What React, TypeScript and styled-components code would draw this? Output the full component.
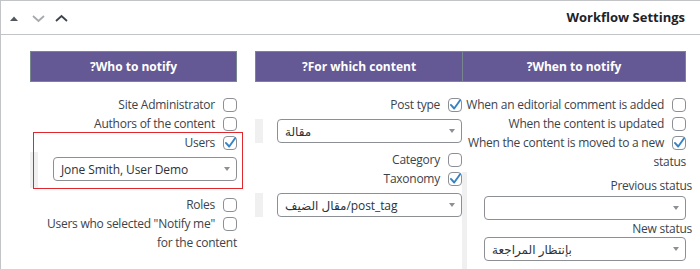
import React from "react";
import styled, { createGlobalStyle } from "styled-components";

const GlobalStyle = createGlobalStyle`
  html, body { margin: 0; padding: 0; background: #ffffff; }
  body {
    overflow: hidden;
    font-family: "Open Sans", "DejaVu Sans", sans-serif;
    color: #3c434a;
  }
  * { box-sizing: border-box; }
`;

const Postbox = styled.section`
  width: 700px;
  height: 269px;
  overflow: hidden;
  border: 1px solid #c3c4c7;
  border-right: 0;
  border-bottom: 0;
  background: #ffffff;
  direction: rtl;
`;

const Header = styled.header`
  height: 34px;
  border-bottom: 1px solid #c3c4c7;
  display: flex;
  align-items: center;
  justify-content: space-between;
  padding: 0 15px 0 8px;
`;

const Title = styled.h2`
  margin: 0;
  font-size: 13px;
  font-weight: 700;
  color: #1d2327;
  line-height: 1;
`;

const Handles = styled.div`
  direction: ltr;
  display: flex;
  align-items: center;
  margin-top: 1px;
`;

const HandleIcon = styled.svg<{ $gap: number }>`
  display: block;
  margin-left: ${(p) => p.$gap}px;
  overflow: visible;
`;

const Body = styled.div`
  display: flex;
  align-items: flex-start;
  gap: 18px;
  padding: 16px 14px 0 29px;
`;

const Table = styled.div<{ $cols: string }>`
  display: grid;
  grid-template-columns: ${(p) => p.$cols};
`;

const HeadCell = styled.div<{ $divider?: boolean }>`
  height: 31px;
  background: #645994;
  color: #ffffff;
  font-size: 12px;
  font-weight: 700;
  display: flex;
  align-items: center;
  justify-content: center;
  border: 1px solid #76878d;
  border-right-width: ${(p) => (p.$divider ? 0 : 1)}px;
`;

const Cell = styled.div`
  padding-top: 13px;
  min-width: 0;
`;

const CheckRow = styled.div<{ $mt?: number }>`
  font-size: 12px;
  letter-spacing: -0.25px;
  line-height: 19px;
  text-align: right;
  color: #3c434a;
  margin-top: ${(p) => p.$mt ?? 0}px;
`;

const BoxSvg = styled.svg`
  display: inline-block;
  vertical-align: -2.5px;
  margin-left: 8px;
  overflow: visible;
`;

const Checkbox = ({ checked }: { checked?: boolean }) => (
  <BoxSvg width="14" height="14" viewBox="0 0 14 14">
    <rect x="0.5" y="0.5" width="13" height="13" rx="3.5" fill="#ffffff" stroke="#8c8f94" />
    {checked && (
      <polyline
        points="2.9,6.9 6.2,10.5 12.1,2.3"
        fill="none"
        stroke="#3582c4"
        strokeWidth="1.9"
        strokeLinecap="round"
        strokeLinejoin="round"
      />
    )}
  </BoxSvg>
);

const Option = ({ checked, children, mt }: { checked?: boolean; children: React.ReactNode; mt?: number }) => (
  <CheckRow $mt={mt}>
    <Checkbox checked={checked} />
    {children}
  </CheckRow>
);

const SelectWrap = styled.div<{ $strip: number; $pad: number; $pt?: number; $pb?: number; $mt?: number }>`
  border-left: ${(p) => p.$strip}px solid #f0f0f1;
  padding: ${(p) => p.$pt ?? 0}px 0 ${(p) => p.$pb ?? 0}px ${(p) => p.$pad}px;
  margin-top: ${(p) => p.$mt ?? 0}px;
`;

const SelectBox = styled.div<{ $mt?: number }>`
  direction: ltr;
  height: 24px;
  margin-top: ${(p) => p.$mt ?? 0}px;
  border: 1px solid #8c8f94;
  border-radius: 4px;
  background: #ffffff;
  display: flex;
  align-items: center;
  justify-content: space-between;
  padding: 0 6px 0 7px;
  font-size: 12px;
  letter-spacing: -0.1px;
  color: #2c3338;
  white-space: nowrap;
`;

const SelectText = styled.span`
  font-family: "Open Sans", "DejaVu Sans", sans-serif;
`;

const Arrow = styled.span`
  width: 0;
  height: 0;
  border-left: 3.5px solid transparent;
  border-right: 3.5px solid transparent;
  border-top: 4px solid #8c8f94;
  flex: none;
`;

const Select = ({ value, mt }: { value?: string; mt?: number }) => (
  <SelectBox $mt={mt}>
    <SelectText>{value ?? ""}</SelectText>
    <Arrow />
  </SelectBox>
);

const UsersGroup = styled.div`
  position: relative;
`;

const Highlight = styled.div`
  position: absolute;
  top: -1px;
  bottom: -1px;
  left: 3px;
  right: -6px;
  border: 1px solid #e0282e;
  pointer-events: none;
`;

const StatusBlock = styled.div`
  margin-top: 1px;
  border-left: 5px solid #f0f0f1;
  padding: 5px 0 40px 17px;
`;

const FieldLabel = styled.div`
  font-size: 12px;
  letter-spacing: -0.25px;
  line-height: 17px;
  text-align: right;
  margin-right: -6px;
  color: #3c434a;
`;

export default function App() {
  return (
    <>
      <GlobalStyle />
      <Postbox>
        <Header>
          <Title>Workflow Settings</Title>
          <Handles>
            <HandleIcon $gap={1} width="8" height="5" viewBox="0 0 8 5">
              <polygon points="0,5 4,0.5 8,5" fill="#50575e" />
            </HandleIcon>
            <HandleIcon $gap={14} width="13" height="7" viewBox="0 0 13 7">
              <polyline points="1,1 6.5,6 12,1" fill="none" stroke="#a7aaad" strokeWidth="1.8" />
            </HandleIcon>
            <HandleIcon $gap={10} width="13" height="7" viewBox="0 0 13 7">
              <polyline points="1,6 6.5,1 12,6" fill="none" stroke="#3c434a" strokeWidth="1.8" />
            </HandleIcon>
          </Handles>
        </Header>

        <Body>
          <Table $cols="224px 207px">
            <HeadCell>When to notify?</HeadCell>
            <HeadCell $divider>For which content?</HeadCell>

            <Cell>
              <Option>When an editorial comment is added</Option>
              <Option>When the content is updated</Option>
              <Option checked>When the content is moved to a new status</Option>
              <StatusBlock>
                <FieldLabel>Previous status</FieldLabel>
                <Select mt={2} />
                <FieldLabel>New status</FieldLabel>
                <Select value="بإنتظار المراجعة" />
              </StatusBlock>
            </Cell>

            <Cell>
              <Option checked>Post type</Option>
              <SelectWrap $strip={8} $pad={14} $mt={5}>
                <Select value="مقالة" />
              </SelectWrap>
              <Option mt={7}>Category</Option>
              <Option checked>Taxonomy</Option>
              <SelectWrap $strip={8} $pad={14} $mt={5}>
                <Select value="مقال الضيف/post_tag" />
              </SelectWrap>
            </Cell>
          </Table>

          <Table $cols="207px">
            <HeadCell>Who to notify?</HeadCell>
            <Cell>
              <Option>Site Administrator</Option>
              <Option>Authors of the content</Option>
              <UsersGroup>
                <Option checked>Users</Option>
                <SelectWrap $strip={8} $pad={15} $pt={5} $pb={7}>
                  <Select value="Jone Smith, User Demo" />
                </SelectWrap>
                <Highlight />
              </UsersGroup>
              <Option mt={7}>Roles</Option>
              <Option>Users who selected "Notify me" for the content</Option>
            </Cell>
          </Table>
        </Body>
      </Postbox>
    </>
  );
}
